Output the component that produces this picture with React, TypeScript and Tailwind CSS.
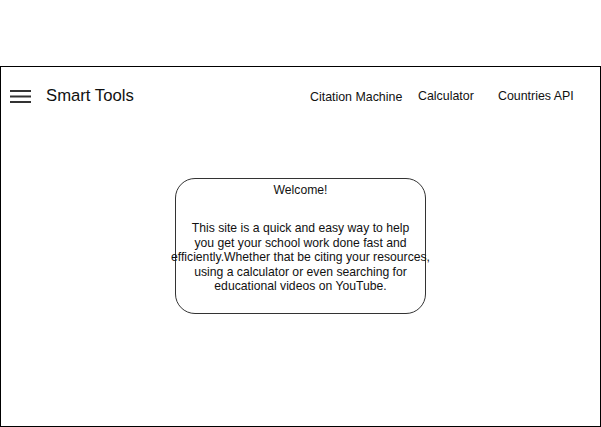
export default function App() {
  return (
    <div className="w-[601px] h-[427px] bg-white overflow-hidden" style={{ fontFamily: '"Liberation Sans", Arial, sans-serif' }}>
      <div className="h-[66px]" />
      <div className="w-[601px] h-[361px] border border-black text-black">
        <div className="flex items-center h-[58px]">
          <svg className="ml-[9px]" width="21" height="14" viewBox="0 0 21 14">
            <rect x="0" y="1" width="21" height="2" fill="#333" />
            <rect x="0" y="6.5" width="21" height="2" fill="#333" />
            <rect x="0" y="12" width="21" height="2" fill="#333" />
          </svg>
          <span className="ml-[15px] w-[264px] text-[16.7px] leading-[20px] text-[#111]">Smart Tools</span>
          <span className="w-[108px] mt-[2px] text-[12.4px] leading-[14px] text-[#111]">Citation Machine</span>
          <span className="w-[80px] text-[12.4px] leading-[14px] text-[#111]">Calculator</span>
          <span className="text-[12.4px] leading-[14px] text-[#111]">Countries API</span>
        </div>
        <div className="ml-[174px] mt-[53px] w-[251px] h-[136px] border border-[#333] rounded-[20px]">
          <div className="-mx-[8px] text-center text-[12.2px] leading-[14.4px] text-[#111]">
            <div className="pt-[4px]">Welcome!</div>
            <div className="mt-[24px]">
              This site is a quick and easy way to help
              <br />
              you get your school work done fast and
              <br />
              efficiently.Whether that be citing your resources,
              <br />
              using a calculator or even searching for
              <br />
              educational videos on YouTube.
            </div>
          </div>
        </div>
      </div>
    </div>
  );
}
